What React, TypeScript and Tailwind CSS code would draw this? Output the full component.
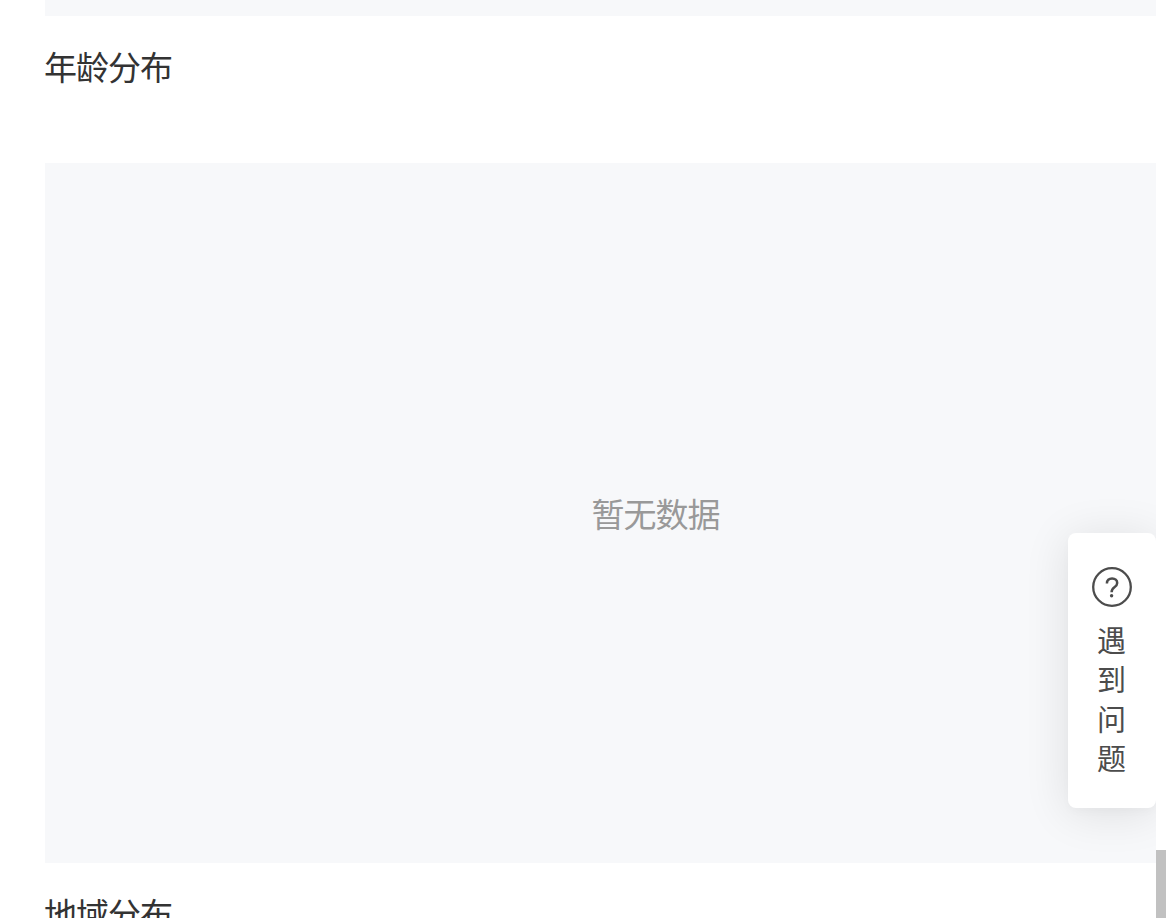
import React from 'react'

const Title = ({ children }: { children: React.ReactNode }) => {
    return (
        <h2 className="text-[33px] leading-[44px] tracking-[-1px] text-[#333333] whitespace-nowrap -ml-px">
            {children}
        </h2>
    )
}

const HelpButton = () => {
    return (
        <button
            className="absolute right-0 top-[533px] w-[88px] h-[275px] rounded-lg bg-white flex flex-col items-center pt-[34px] text-[#4c4c4c] shadow-[0_4px_10px_rgba(0,0,0,0.02),0_5px_46px_rgba(0,0,0,0.11)]"
        >
            <svg className="w-10 h-10 shrink-0" viewBox="0 0 40 40" fill="none">
                <circle cx="20" cy="20" r="18.8" stroke="currentColor" strokeWidth="2.3" />
                <path
                    d="M14.9 16.4C14.9 13.4 17 11.4 20.1 11.4C23.1 11.4 25.2 13.2 25.2 15.9C25.2 17.9 24.2 18.9 22.4 20.2C20.4 21.6 19.6 22.5 19.6 25.2"
                    stroke="currentColor"
                    strokeWidth="2.5"
                />
                <circle cx="19.6" cy="28.8" r="1.7" fill="currentColor" />
            </svg>
            <span className="w-[29px] mt-[13px] text-[29px] leading-[39.3px] -ml-px break-all">遇到问题</span>
        </button>
    )
}

export default function App() {
    return (
        <div className="flex w-[1166px] h-[918px] overflow-hidden bg-white font-['Noto_Sans_CJK_SC',sans-serif]">
            <main className="relative w-[1156px] h-full overflow-hidden pl-[45px]">
                <div className="w-[1221px]">
                    <div className="h-4 bg-[#f7f8fa]"></div>
                    <section className="pt-[28px]">
                        <Title>年龄分布</Title>
                        <div className="mt-[75px] h-[700px] bg-[#f7f8fa] flex items-center justify-center">
                            <p className="text-[33px] leading-[44px] tracking-[-1px] text-[#999999]">暂无数据</p>
                        </div>
                    </section>
                    <section className="pt-[28px]">
                        <Title>地域分布</Title>
                    </section>
                </div>
                <HelpButton />
            </main>
            {/* scrollbar */}
            <div className="w-[10px] h-full pt-[850px]">
                <div className="h-[68px] bg-[#c1c1c1]"></div>
            </div>
        </div>
    )
}
